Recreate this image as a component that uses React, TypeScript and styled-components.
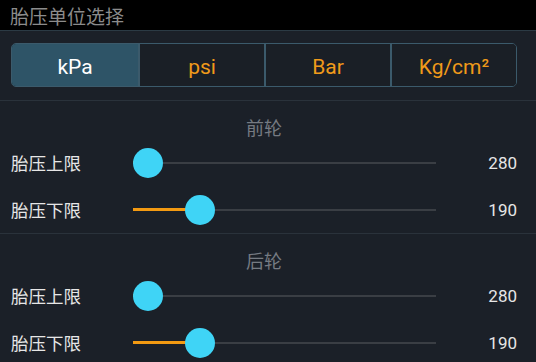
import React, { useState } from "react";
import styled, { createGlobalStyle } from "styled-components";

const GlobalStyle = createGlobalStyle`
  html, body {
    margin: 0;
    padding: 0;
    background: #1b2028;
  }
  body {
    font-family: Roboto, "Noto Sans CJK SC", sans-serif;
  }
`;

const Page = styled.div`
  width: 536px;
  height: 362px;
  overflow: hidden;
  background: #1b2028;
`;

const TitleBar = styled.div`
  height: 30px;
  background: #000;
  border-bottom: 1px solid #2b3a44;
  display: flex;
  align-items: center;
  padding-left: 10px;
  font-size: 19px;
  color: #8c8c8c;
`;

const UnitBar = styled.div`
  padding: 12px 19px 13px 11px;
  border-bottom: 1px solid #2a323b;
`;

const Segmented = styled.div`
  display: grid;
  grid-template-columns: repeat(4, 1fr);
  height: 44px;
  border: 1px solid #3b5a6b;
  border-radius: 5px;
  overflow: hidden;
  box-sizing: border-box;
`;

const Segment = styled.button<{ $active: boolean }>`
  border: none;
  border-left: 2px solid #3b5a6b;
  background: ${(p) => (p.$active ? "#2e5467" : "#1a1f26")};
  color: ${(p) => (p.$active ? "#ffffff" : "#f09a1a")};
  font-family: Roboto, sans-serif;
  font-size: 21px;
  padding: 3px 0 0;
  cursor: pointer;

  &:first-child {
    border-left: none;
  }
`;

const Section = styled.div`
  border-bottom: 1px solid #2a323b;

  &:last-child {
    border-bottom: none;
  }
`;

const SectionTitle = styled.div`
  padding: 18px 19px 0 11px;
  height: 20px;
  line-height: 20px;
  text-align: center;
  font-size: 18px;
  color: #767b82;
`;

const Row = styled.div`
  height: 47px;
  display: grid;
  grid-template-columns: 122px 303px 1fr;
  align-items: center;
  padding: 0 19px 0 11px;
`;

const Label = styled.span`
  font-size: 17.5px;
  color: #e6e6e6;
`;

const Value = styled.span`
  font-size: 17px;
  color: #e6e6e6;
  text-align: right;
`;

const Track = styled.div`
  position: relative;
  height: 2px;
  background: #3a3e44;
`;

const Fill = styled.div`
  position: absolute;
  left: 0;
  top: -0.5px;
  height: 3px;
  background: #f39a12;
`;

const Thumb = styled.div`
  position: absolute;
  top: 50%;
  width: 30px;
  height: 30px;
  margin: -15px 0 0 -15px;
  border-radius: 50%;
  background: #3fd4f6;
`;

interface SliderRowProps {
  label: string;
  value: number;
  min: number;
  max: number;
}

const SliderRow: React.FC<SliderRowProps> = ({ label, value, min, max }) => {
  const pct = ((value - min) / (max - min)) * 100;
  const thumbLeft = `calc(15px + ${pct}% - ${pct * 0.3}px)`;
  return (
    <Row>
      <Label>{label}</Label>
      <Track>
        <Fill style={{ width: thumbLeft }} />
        <Thumb style={{ left: thumbLeft }} />
      </Track>
      <Value>{value}</Value>
    </Row>
  );
};

const units = ["kPa", "psi", "Bar", "Kg/cm²"];

const App: React.FC = () => {
  const [unit, setUnit] = useState("kPa");

  const sections = [
    { title: "前轮", high: 280, low: 190 },
    { title: "后轮", high: 280, low: 190 },
  ];

  return (
    <>
      <GlobalStyle />
      <Page>
        <TitleBar>胎压单位选择</TitleBar>
        <UnitBar>
          <Segmented>
            {units.map((u) => (
              <Segment key={u} $active={u === unit} onClick={() => setUnit(u)}>
                {u}
              </Segment>
            ))}
          </Segmented>
        </UnitBar>
        {sections.map((s) => (
          <Section key={s.title}>
            <SectionTitle>{s.title}</SectionTitle>
            <SliderRow label="胎压上限" value={s.high} min={280} max={580} />
            <SliderRow label="胎压下限" value={s.low} min={150} max={360} />
          </Section>
        ))}
      </Page>
    </>
  );
};

export default App;
